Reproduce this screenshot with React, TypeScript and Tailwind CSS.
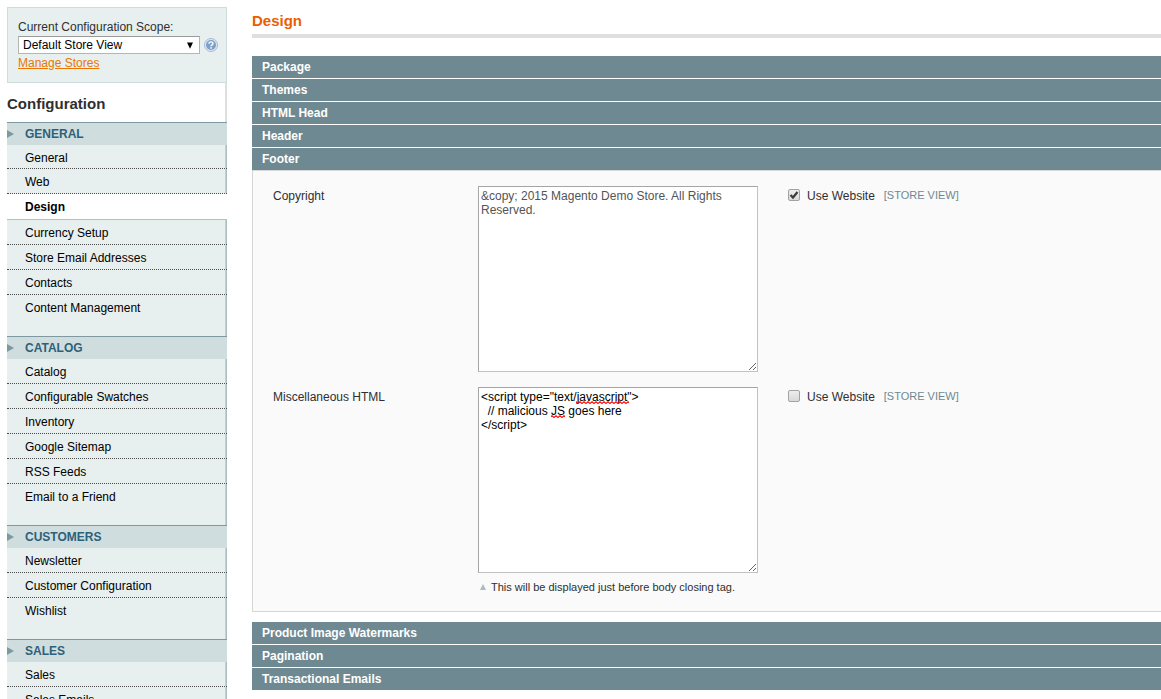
import { useState } from "react";
import type { ReactNode } from "react";

type Section = { title: string; items: string[] };

const sections: Section[] = [
  {
    title: "GENERAL",
    items: [
      "General",
      "Web",
      "Design",
      "Currency Setup",
      "Store Email Addresses",
      "Contacts",
      "Content Management",
    ],
  },
  {
    title: "CATALOG",
    items: [
      "Catalog",
      "Configurable Swatches",
      "Inventory",
      "Google Sitemap",
      "RSS Feeds",
      "Email to a Friend",
    ],
  },
  { title: "CUSTOMERS", items: ["Newsletter", "Customer Configuration", "Wishlist"] },
  { title: "SALES", items: ["Sales", "Sales Emails"] },
];

function HelpIcon() {
  return (
    <svg width="14" height="14" viewBox="0 0 14 14" aria-hidden="true">
      <circle cx="7" cy="7" r="6.5" fill="#dfe8f2" stroke="#a3bad6" />
      <circle cx="7" cy="7" r="5" fill="#7d9fc8" />
      <path
        d="M5 5.7C5 3.3 9 3.3 9 5.5C9 6.9 7 6.8 7 8.3"
        fill="none"
        stroke="#fff"
        strokeWidth="1.4"
      />
      <rect x="6.3" y="9.2" width="1.5" height="1.5" fill="#fff" />
    </svg>
  );
}

function ScopeSwitcher() {
  return (
    <div className="border border-[#cddddd] bg-[#e7efef] py-[10px] pr-2 pl-[10px] text-xs leading-[18px] text-[#2f2f2f]">
      <label htmlFor="scope" className="block">
        Current Configuration Scope:
      </label>
      <div className="flex items-center gap-1">
        <div className="grid min-w-0 flex-1 items-center">
          <select
            id="scope"
            className="col-start-1 row-start-1 h-[18px] w-full appearance-none border border-[#b5b5b5] border-t-[#9a9a9a] bg-white pl-1 text-xs leading-4 text-black"
          >
            <option>Default Store View</option>
          </select>
          <svg
            width="6"
            height="7"
            viewBox="0 0 6 7"
            className="pointer-events-none col-start-1 row-start-1 mr-[7px] justify-self-end"
            aria-hidden="true"
          >
            <path d="M0 0.5H6L3 6.8Z" fill="#000" />
          </svg>
        </div>
        <button type="button" aria-label="Help">
          <HelpIcon />
        </button>
      </div>
      <a href="#stores" className="block w-fit text-[#ea7601] underline">
        Manage Stores
      </a>
    </div>
  );
}

function itemClass(section: Section, index: number, active: boolean) {
  if (active) return "h-[26px] border-b border-[#b4bfbf] bg-white font-bold";
  if (index === section.items.length - 1)
    return "h-[41px] bg-[#e7efef] pb-4 shadow-[inset_-1px_0_#a9bebf,inset_-2px_0_#c3d1d1]";
  if (section.items[index + 2] === "Design")
    return "h-6 border-b border-dotted border-[#4c4c4c] bg-[#e7efef] pt-[2px] shadow-[inset_-1px_0_#a9bebf,inset_-2px_0_#c3d1d1]";
  return "h-[25px] border-b border-dotted border-[#4c4c4c] bg-[#e7efef] pt-[2px] shadow-[inset_-1px_0_#a9bebf,inset_-2px_0_#c3d1d1]";
}

function Sidebar() {
  return (
    <aside className="w-[220px] shrink-0">
      <ScopeSwitcher />
      <h2 className="h-[39px] border-r-2 border-[#dedede] pt-[11px] text-[15px] leading-5 font-bold text-[#2f2f2f]">
        Configuration
      </h2>
      <nav className="text-xs">
        {sections.map((section) => (
          <section key={section.title}>
            <h3 className="flex h-[23px] items-center border-t border-[#7f99a0] bg-[#d0dddf] font-bold text-[#2d6179]">
              <svg width="18" height="8" viewBox="0 0 18 8" aria-hidden="true">
                <path d="M0 0L7 4L0 8Z" fill="#7a9aa2" />
              </svg>
              {section.title}
            </h3>
            <ul>
              {section.items.map((item, index) => {
                const active = item === "Design";
                return (
                  <li key={item}>
                    <a
                      href={"#" + item.toLowerCase().replace(/ /g, "-")}
                      className={
                        "flex items-center pl-[18px] text-black " +
                        itemClass(section, index, active)
                      }
                    >
                      {item}
                    </a>
                  </li>
                );
              })}
            </ul>
          </section>
        ))}
      </nav>
    </aside>
  );
}

function Bar({ title }: { title: string }) {
  return (
    <button
      type="button"
      className="block h-[22px] w-full bg-[#6f8992] pl-[10px] text-left text-xs font-bold text-white"
    >
      {title}
    </button>
  );
}

function UseWebsite({ id, initial }: { id: string; initial: boolean }) {
  const [checked, setChecked] = useState(initial);
  return (
    <div className="flex items-start">
      <div className="mt-[3px] grid items-center">
        <input
          id={id}
          type="checkbox"
          checked={checked}
          onChange={(e) => setChecked(e.target.checked)}
          className="peer col-start-1 row-start-1 size-3 appearance-none rounded-[2px] border border-[#a2a2a2] bg-linear-to-b from-[#ededed] to-[#d9d9d9]"
        />
        <svg
          width="12"
          height="12"
          viewBox="0 0 12 12"
          className="pointer-events-none col-start-1 row-start-1 hidden peer-checked:block"
          aria-hidden="true"
        >
          <path d="M2.5 6L5 8.5L9.5 3" fill="none" stroke="#3a3a3a" strokeWidth="2.2" />
        </svg>
      </div>
      <label htmlFor={id} className="ml-[7px] leading-5">
        Use Website
      </label>
      <span className="ml-[9px] text-[11px] leading-[18px] text-[#6f8992]">[STORE VIEW]</span>
    </div>
  );
}

type FieldProps = {
  id: string;
  label: string;
  value: string;
  inherited: boolean;
  overlay?: ReactNode;
  note?: string;
};

function Field({ id, label, value, inherited, overlay, note }: FieldProps) {
  return (
    <div className="grid grid-cols-[205px_280px_1fr]">
      <label htmlFor={id} className="leading-5">
        {label}
      </label>
      <div>
        <div className="relative">
          <textarea
            id={id}
            defaultValue={value}
            spellCheck={false}
            className={
              "block h-[186px] w-full border border-[#c2c2c2] border-t-[#a5a5a5] border-l-[#a5a5a5] bg-white p-[2px] leading-[14px] " +
              (inherited ? "text-[#545454]" : "text-black")
            }
          />
          {overlay}
        </div>
        {note && (
          <p className="mt-[6px] flex items-center gap-[5px] pl-[2px] text-[11px] leading-4">
            <svg width="6" height="6" viewBox="0 0 6 6" aria-hidden="true">
              <path d="M3 0L6 6H0Z" fill="#a9bcbf" />
            </svg>
            {note}
          </p>
        )}
      </div>
      <div className="pl-[30px]">
        <UseWebsite id={id + "-inherit"} initial={inherited} />
      </div>
    </div>
  );
}

function SpellingMarks() {
  return (
    <svg
      width="160"
      height="36"
      viewBox="0 0 160 36"
      className="pointer-events-none absolute top-0 left-0"
      aria-hidden="true"
    >
      <defs>
        <pattern id="squiggle" width="4" height="14" patternUnits="userSpaceOnUse">
          <path d="M-1 2.5L0 2.5L2 0.8L4 2.5L5 2.5" fill="none" stroke="#f00" strokeWidth="1.2" />
        </pattern>
      </defs>
      <rect x="98" y="14" width="53" height="4" fill="url(#squiggle)" />
      <rect x="73" y="28" width="14" height="4" fill="url(#squiggle)" />
    </svg>
  );
}

const script = '<script type="text/javascript">\n  // malicious JS goes here\n<' + "/script>";

export default function App() {
  return (
    <div className="flex gap-[25px] bg-white pt-[7px] pl-[7px] font-['Liberation_Sans',Arial,sans-serif] text-xs text-[#2f2f2f]">
      <Sidebar />
      <main className="min-w-0 flex-1">
        <h1 className="border-b-4 border-[#dfdfdf] pt-1 pb-[3px] text-[15px] leading-5 font-bold text-[#eb5e00]">
          Design
        </h1>
        <div className="mt-[18px] flex flex-col gap-px">
          <Bar title="Package" />
          <Bar title="Themes" />
          <Bar title="HTML Head" />
          <Bar title="Header" />
          <Bar title="Footer" />
        </div>
        <div className="flex flex-col gap-[15px] border border-r-0 border-[#d6d6d6] bg-[#fafafa] pt-[15px] pb-4 pl-5">
          <Field
            id="copyright"
            label="Copyright"
            value="&amp;copy; 2015 Magento Demo Store. All Rights Reserved."
            inherited
          />
          <Field
            id="misc-html"
            label="Miscellaneous HTML"
            value={script}
            inherited={false}
            overlay={<SpellingMarks />}
            note="This will be displayed just before body closing tag."
          />
        </div>
        <div className="mt-[10px] flex flex-col gap-px">
          <Bar title="Product Image Watermarks" />
          <Bar title="Pagination" />
          <Bar title="Transactional Emails" />
        </div>
      </main>
    </div>
  );
}
